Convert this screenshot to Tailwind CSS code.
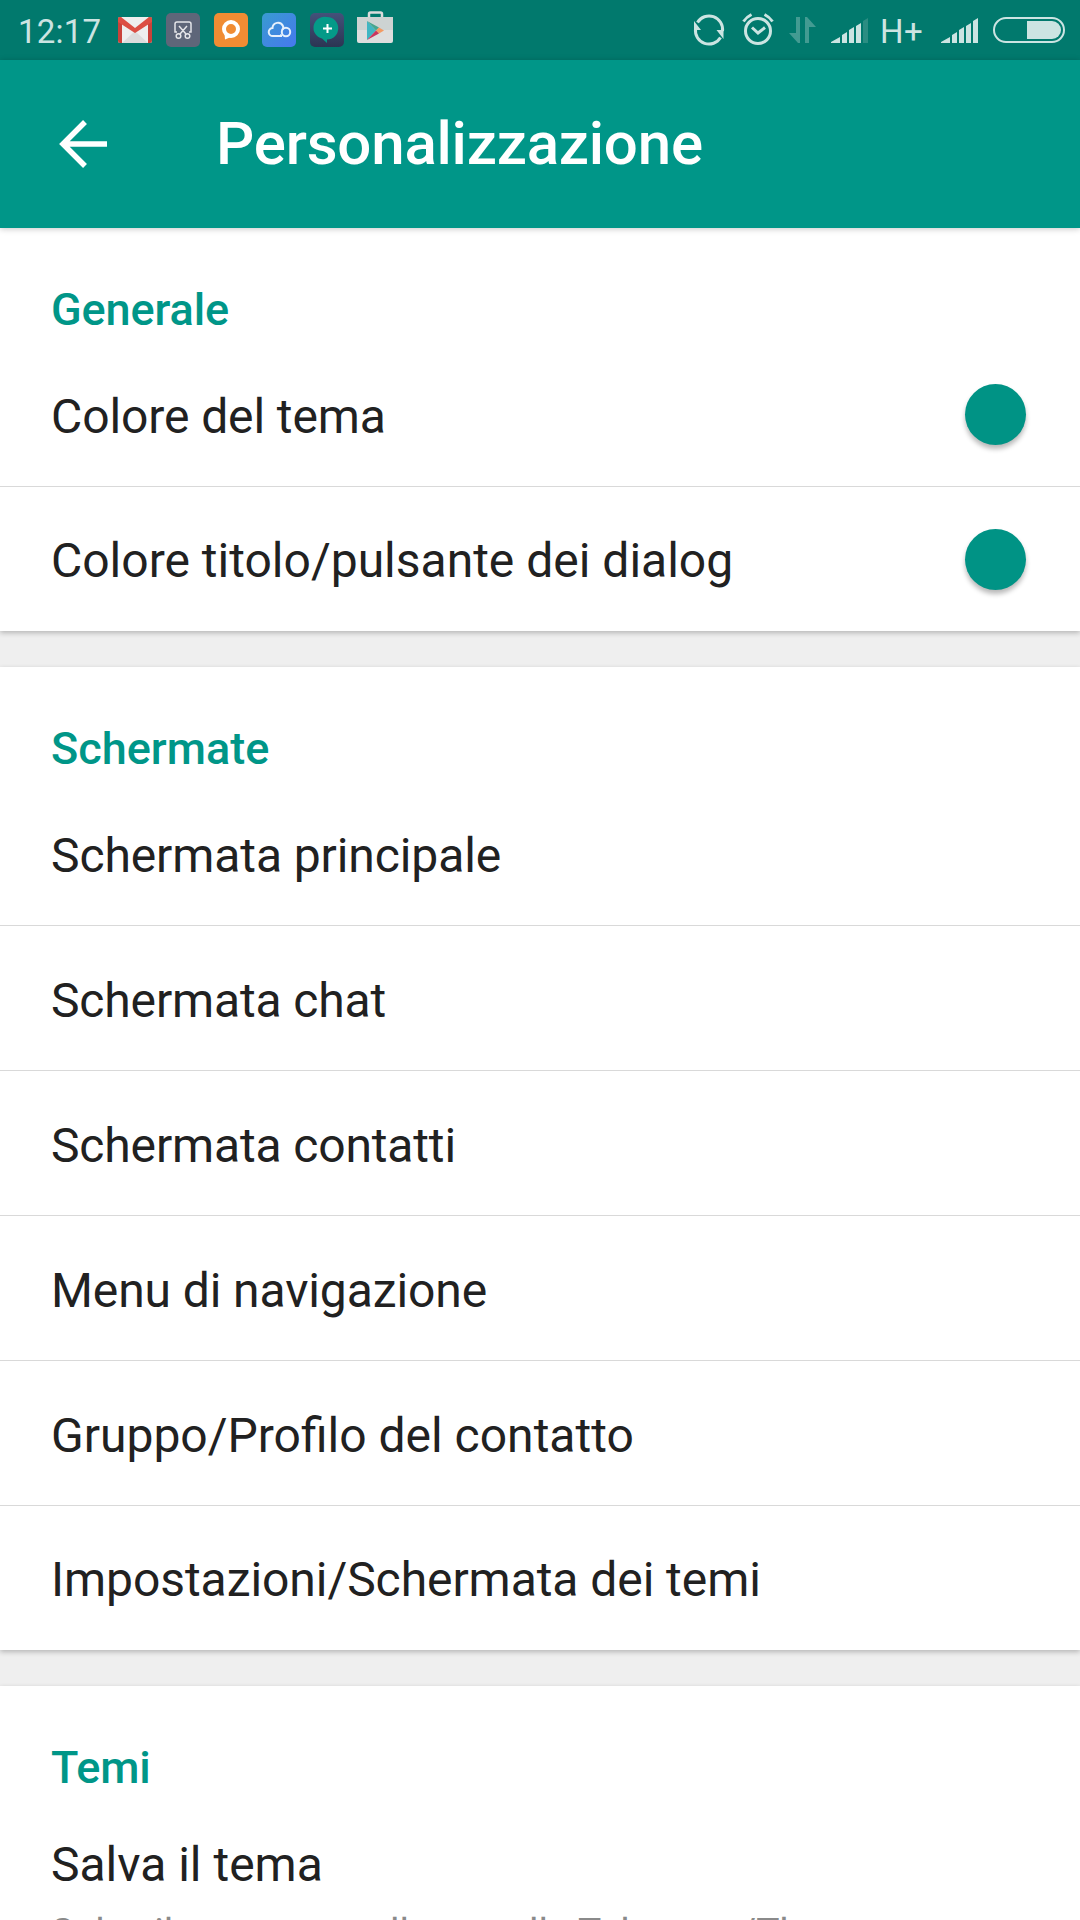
<!DOCTYPE html>
<html lang="it">
<head>
    <meta charset="UTF-8">
    <title>Personalizzazione</title>
    <script src="https://cdn.jsdelivr.net/npm/@tailwindcss/browser@4"></script>
    <style>
        body {
            font-family: Roboto, sans-serif;
        }
    </style>
</head>
<body class="w-[1080px] h-[1920px] overflow-hidden bg-[#efefef] text-[#212121] flex flex-col">

    <!-- Status bar -->
    <div class="h-[60px] shrink-0 bg-[#01796d] flex items-center justify-between text-[#cce4e2]">
        <div class="flex items-center h-full pl-[18px]">
            <span class="w-[99px] text-[33px] leading-[60px] pt-[4px] tracking-[0.2px] whitespace-nowrap">12:17</span>
            <svg class="w-[240px] h-[60px] -ml-[1px]" viewBox="116 0 240 60">
                <defs>
                    <linearGradient id="cloud" x1="0" y1="0" x2="1" y2="1">
                        <stop offset="0" stop-color="#399bd0"/><stop offset="1" stop-color="#4678ee"/>
                    </linearGradient>
                    <linearGradient id="night" x1="0" y1="0" x2="0" y2="1">
                        <stop offset="0" stop-color="#44517a"/><stop offset="1" stop-color="#2b3553"/>
                    </linearGradient>
                </defs>
                <!-- Gmail -->
                <rect x="118" y="17" width="34" height="26" rx="2" fill="#eeeeee"/>
                <path d="M122 43L135 31L148 43Z" fill="#dcdcdc"/>
                <path d="M118 19q0-2 2-2l2 1v25h-2q-2 0-2-2zM152 19q0-2-2-2l-2 1v25h2q2 0 2-2z" fill="#c9423a"/>
                <path d="M118 19q0-2 3-2l14 11l14-11q3 0 3 2v3l-17 11l-17-11z" fill="#dc4e43"/>
                <!-- Screenshot -->
                <rect x="166" y="13" width="34" height="34" rx="5" fill="#5e6679"/>
                <g fill="none" stroke="#e4e5e9" stroke-width="1.5">
                    <path d="M177 32h-2v-8q0-2 2-2h12q2 0 2 2v8h-2M179 26l7 8M187 26l-7 8"/>
                    <circle cx="178.500" cy="36" r="2.300"/><circle cx="187.500" cy="36" r="2.300"/>
                </g>
                <!-- Chat -->
                <rect x="214" y="13" width="34" height="34" rx="5" fill="#f08c33"/>
                <circle cx="231" cy="29" r="7" fill="none" stroke="#fff" stroke-width="4"/>
                <path d="M224.500 32l.5 7.500l6-2.500z" fill="#fff"/>
                <!-- Cloud -->
                <rect x="262" y="13" width="34" height="34" rx="5" fill="url(#cloud)"/>
                <g fill="none" stroke="#e6f0fc" stroke-width="2">
                    <path d="M282 36H273a4 4 0 0 1-.5-8a5.500 5.500 0 0 1 10.500-2q1 2-1 4"/>
                    <path d="M282 36l-2-1"/><circle cx="286" cy="32" r="4.200"/>
                </g>
                <!-- Plus Messenger -->
                <rect x="310" y="13" width="34" height="34" rx="5" fill="url(#night)"/>
                <path d="M327 17a11 11 0 0 1 0 22.500v3.500l-5-4.500a11 11 0 0 1 5-21.500z" fill="#049a88"/>
                <path d="M327.500 24v9M323 28.500h9" stroke="#fff" stroke-width="2"/>
            </svg>
            <!-- Play Store -->
            <svg class="w-[40px] h-[60px] -ml-[1px]" viewBox="355 0 40 60">
                <path d="M369 18v-4q0-1.500 1.500-1.500h10q1.500 0 1.500 1.500v4" fill="none" stroke="#dcdcdc" stroke-width="2.500"/>
                <path d="M357 17h36v24q0 2-2 2h-32q-2 0-2-2z" fill="#dedede"/>
                <path d="M357 17h36v13h-36z" fill="#cdd3d2"/>
                <path d="M367 21v19l9-9.500z" fill="#41b6c3"/>
                <path d="M367 21l12 6.500l-3 3z" fill="#45a68f"/>
                <path d="M379 27.500l5 3l-5 3l-3-3z" fill="#f39a63"/>
                <path d="M367 40l9-9.500l3 3z" fill="#c9355c"/>
            </svg>
        </div>
        <div class="flex items-center h-full">
            <svg class="w-[190px] h-[60px]" viewBox="690 0 190 60">
                <!-- Sync -->
                <g fill="none" stroke="#cce4e2" stroke-width="3">
                    <path d="M697.500 22.500a13.500 13.500 0 0 1 25 8.500"/>
                    <path d="M720.500 37.500a13.500 13.500 0 0 1-25-8.500"/>
                </g>
                <path d="M694 21v9h7zM723.500 39v-9h-7z" fill="#cce4e2"/>
                <!-- Alarm -->
                <g fill="none" stroke="#cce4e2" stroke-width="3">
                    <circle cx="758" cy="31" r="12.500"/>
                    <path d="M752 27.500l6 5.500l7-5.500"/>
                    <path d="M743.500 21.500q3-4.500 8-7M772.500 21.500q-3-4.500-8-7"/>
                </g>
                <!-- Data arrows -->
                <path d="M796 17h4v26h-2l-9-10h7zM805 43h4V27h7l-9-10h-2z" fill="#439b92"/>
                <!-- Signal -->
                <path d="M831 43v-1l9-5v6zM842 43v-8l5-3v11zM849 43V30l5-3v16zM856 43V26l5-3v20z" fill="#cce4e2"/>
                <path d="M863 43V21l5-3v25z" fill="#2b8d82"/>
            </svg>
            <span class="w-[55px] text-[33px] leading-[60px] pt-[4px] tracking-[0.5px] whitespace-nowrap">H+</span>
            <svg class="w-[145px] h-[60px]" viewBox="935 0 145 60">
                <path d="M941 43v-1l9-5v6zM952 43v-8l5-3v11zM959 43V30l5-3v16zM966 43V26l5-3v20zM973 43V21l5-3v25z" fill="#cce4e2"/>
                <!-- Battery -->
                <rect x="994" y="18" width="70" height="24" rx="12" fill="none" stroke="#cce4e2" stroke-width="2"/>
                <path d="M1027 21h25a9 9 0 0 1 0 18h-25z" fill="#cce4e2"/>
            </svg>
        </div>
    </div>

    <!-- App bar -->
    <header class="relative z-10 h-[168px] shrink-0 bg-[#009688] text-white flex items-center pl-[59px] shadow-[0_1px_6px_rgba(0,0,0,0.22)]">
        <svg class="w-[49px] h-[48px]" viewBox="0 0 49 48" fill="none" stroke="currentColor" stroke-width="5.500">
            <path d="M26 2L4 24L26 46M4 24H48"/>
        </svg>
        <h1 class="ml-[108px] text-[60px] leading-[70px] tracking-[-0.2px] font-medium">Personalizzazione</h1>
    </header>

    <!-- Generale -->
    <section class="shrink-0 bg-white shadow-[0_2px_5px_rgba(0,0,0,0.24)]">
        <h2 class="h-[114px] pl-[51px] pt-[55px] text-[45px] leading-[53px] tracking-[-0.1px] font-medium text-[#009688]">Generale</h2>
        <div class="divide-y divide-[#d9d9d9] text-[48px] leading-[56px]">
            <div class="h-[145px] pl-[51px] pr-[54px] flex items-center justify-between">
                <span class="pt-[5px] tracking-[-0.1px]">Colore del tema</span>
                <span class="size-[61px] rounded-full bg-[#009385] shadow-[0_4px_5px_rgba(0,0,0,0.28)]"></span>
            </div>
            <div class="h-[144px] pl-[51px] pr-[54px] flex items-center justify-between">
                <span class="pt-[3px]">Colore titolo/pulsante dei dialog</span>
                <span class="size-[61px] rounded-full bg-[#009385] shadow-[0_4px_5px_rgba(0,0,0,0.28)]"></span>
            </div>
        </div>
    </section>

    <!-- Schermate -->
    <section class="mt-[36px] shrink-0 bg-white shadow-[0_2px_5px_rgba(0,0,0,0.24)]">
        <h2 class="h-[114px] pl-[51px] pt-[55px] text-[45px] leading-[53px] font-medium text-[#009688]">Schermate</h2>
        <div class="divide-y divide-[#d9d9d9] text-[48px] leading-[56px]">
            <div class="h-[145px] pl-[51px] pt-[5px] flex items-center tracking-[-0.1px]">Schermata principale</div>
            <div class="h-[145px] pl-[51px] pt-[5px] flex items-center tracking-[-0.15px]">Schermata chat</div>
            <div class="h-[145px] pl-[51px] pt-[5px] flex items-center tracking-[-0.15px]">Schermata contatti</div>
            <div class="h-[145px] pl-[51px] pt-[5px] flex items-center tracking-[-0.1px]">Menu di navigazione</div>
            <div class="h-[145px] pl-[51px] pt-[5px] flex items-center">Gruppo/Profilo del contatto</div>
            <div class="h-[144px] pl-[51px] pt-[3px] flex items-center tracking-[-0.06px]">Impostazioni/Schermata dei temi</div>
        </div>
    </section>

    <!-- Temi -->
    <section class="mt-[36px] h-[234px] shrink-0 bg-white shadow-[0_2px_5px_rgba(0,0,0,0.24)]">
        <h2 class="h-[114px] pl-[51px] pt-[55px] text-[45px] leading-[53px] tracking-[-0.1px] font-medium text-[#009688]">Temi</h2>
        <div class="pl-[51px] pt-[37px]">
            <p class="text-[48px] leading-[56px]">Salva il tema</p>
            <p class="mt-[17px] text-[39px] leading-[46px] text-[#8a8a8a] whitespace-nowrap">Salva il tuo tema nella cartella Telegram/Themes</p>
        </div>
    </section>

</body>
</html>
